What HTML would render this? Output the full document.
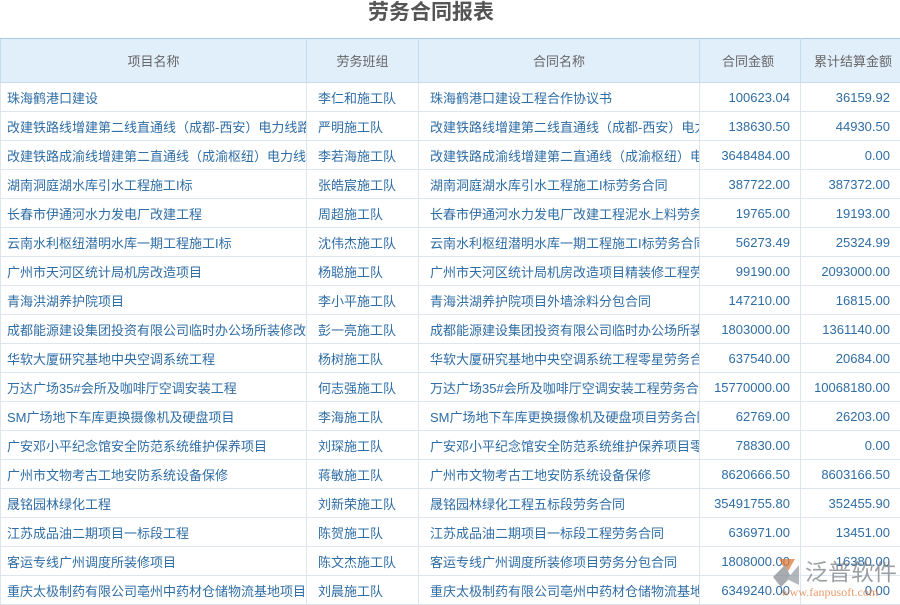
<!DOCTYPE html>
<html><head><meta charset="utf-8"><style>
*{margin:0;padding:0;box-sizing:border-box}
body{width:900px;height:600px;overflow:hidden;background:#fff;font-family:"Liberation Sans","Noto Sans CJK SC",sans-serif;position:relative}
h1{position:absolute;top:0;left:0;width:862px;text-align:center;font-size:21px;font-weight:bold;color:#555;line-height:26px}
table{position:absolute;top:38px;left:0;border-collapse:collapse;table-layout:fixed;width:900px}
th{height:44px;background:#e1effb;color:#666;font-weight:normal;font-size:13px;border:1px solid #c9dced;border-top:1px solid #a9c8e4}
td{height:29px;color:#2f6da5;font-size:13px;border:1px solid #dde6ef;white-space:nowrap;overflow:hidden;padding:0 0 0 11px}
td.a{padding-left:6px}
td.n{text-align:right;padding-right:10px;padding-left:0}
th.r{text-align:right;padding-right:26px}
.wm{position:absolute;left:765px;top:551px;width:135px;height:49px}
</style></head><body>
<h1>劳务合同报表</h1>
<table>
<colgroup><col style="width:306px"><col style="width:112px"><col style="width:281px"><col style="width:101px"><col style="width:100px"></colgroup>
<tr><th>项目名称</th><th>劳务班组</th><th>合同名称</th><th class="r">合同金额</th><th style="text-align:right;padding-right:8px">累计结算金额</th></tr>
<tr><td class="a">珠海鹤港口建设</td><td>李仁和施工队</td><td>珠海鹤港口建设工程合作协议书</td><td class="n">100623.04</td><td class="n">36159.92</td></tr>
<tr><td class="a">改建铁路线增建第二线直通线（成都-西安）电力线路</td><td>严明施工队</td><td>改建铁路线增建第二线直通线（成都-西安）电力</td><td class="n">138630.50</td><td class="n">44930.50</td></tr>
<tr><td class="a">改建铁路成渝线增建第二直通线（成渝枢纽）电力线</td><td>李若海施工队</td><td>改建铁路成渝线增建第二直通线（成渝枢纽）电</td><td class="n">3648484.00</td><td class="n">0.00</td></tr>
<tr><td class="a">湖南洞庭湖水库引水工程施工I标</td><td>张皓宸施工队</td><td>湖南洞庭湖水库引水工程施工I标劳务合同</td><td class="n">387722.00</td><td class="n">387372.00</td></tr>
<tr><td class="a">长春市伊通河水力发电厂改建工程</td><td>周超施工队</td><td>长春市伊通河水力发电厂改建工程泥水上料劳务</td><td class="n">19765.00</td><td class="n">19193.00</td></tr>
<tr><td class="a">云南水利枢纽潜明水库一期工程施工I标</td><td>沈伟杰施工队</td><td>云南水利枢纽潜明水库一期工程施工I标劳务合同</td><td class="n">56273.49</td><td class="n">25324.99</td></tr>
<tr><td class="a">广州市天河区统计局机房改造项目</td><td>杨聪施工队</td><td>广州市天河区统计局机房改造项目精装修工程劳</td><td class="n">99190.00</td><td class="n">2093000.00</td></tr>
<tr><td class="a">青海洪湖养护院项目</td><td>李小平施工队</td><td>青海洪湖养护院项目外墙涂料分包合同</td><td class="n">147210.00</td><td class="n">16815.00</td></tr>
<tr><td class="a">成都能源建设集团投资有限公司临时办公场所装修改</td><td>彭一亮施工队</td><td>成都能源建设集团投资有限公司临时办公场所装</td><td class="n">1803000.00</td><td class="n">1361140.00</td></tr>
<tr><td class="a">华软大厦研究基地中央空调系统工程</td><td>杨树施工队</td><td>华软大厦研究基地中央空调系统工程零星劳务合</td><td class="n">637540.00</td><td class="n">20684.00</td></tr>
<tr><td class="a">万达广场35#会所及咖啡厅空调安装工程</td><td>何志强施工队</td><td>万达广场35#会所及咖啡厅空调安装工程劳务合</td><td class="n">15770000.00</td><td class="n">10068180.00</td></tr>
<tr><td class="a">SM广场地下车库更换摄像机及硬盘项目</td><td>李海施工队</td><td>SM广场地下车库更换摄像机及硬盘项目劳务合同</td><td class="n">62769.00</td><td class="n">26203.00</td></tr>
<tr><td class="a">广安邓小平纪念馆安全防范系统维护保养项目</td><td>刘琛施工队</td><td>广安邓小平纪念馆安全防范系统维护保养项目零</td><td class="n">78830.00</td><td class="n">0.00</td></tr>
<tr><td class="a">广州市文物考古工地安防系统设备保修</td><td>蒋敏施工队</td><td>广州市文物考古工地安防系统设备保修</td><td class="n">8620666.50</td><td class="n">8603166.50</td></tr>
<tr><td class="a">晟铭园林绿化工程</td><td>刘新荣施工队</td><td>晟铭园林绿化工程五标段劳务合同</td><td class="n">35491755.80</td><td class="n">352455.90</td></tr>
<tr><td class="a">江苏成品油二期项目一标段工程</td><td>陈贺施工队</td><td>江苏成品油二期项目一标段工程劳务合同</td><td class="n">636971.00</td><td class="n">13451.00</td></tr>
<tr><td class="a">客运专线广州调度所装修项目</td><td>陈文杰施工队</td><td>客运专线广州调度所装修项目劳务分包合同</td><td class="n">1808000.00</td><td class="n">16380.00</td></tr>
<tr><td class="a">重庆太极制药有限公司亳州中药材仓储物流基地项目</td><td>刘晨施工队</td><td>重庆太极制药有限公司亳州中药材仓储物流基地</td><td class="n">6349240.00</td><td class="n">0.00</td></tr>
</table>
<svg class="wm" viewBox="0 0 135 49">
<g opacity="0.75">
<path d="M14 8 L30 8 L22 22 Z" fill="#e07a3a"/>
<path d="M8 26 L20 14 L26 26 L16 36 Z" fill="#8a8f96"/>
<path d="M22 28 L34 14 L34 34 Z" fill="#9aa0a6"/>
<text x="40" y="29" font-family="Noto Sans CJK SC,sans-serif" font-size="23" fill="#7a8088">泛普软件</text>
<text x="16" y="45" font-family="Liberation Serif,serif" font-size="12" fill="#e07a3a">www.fanpusoft.com</text>
</g>
</svg>
</body></html>
